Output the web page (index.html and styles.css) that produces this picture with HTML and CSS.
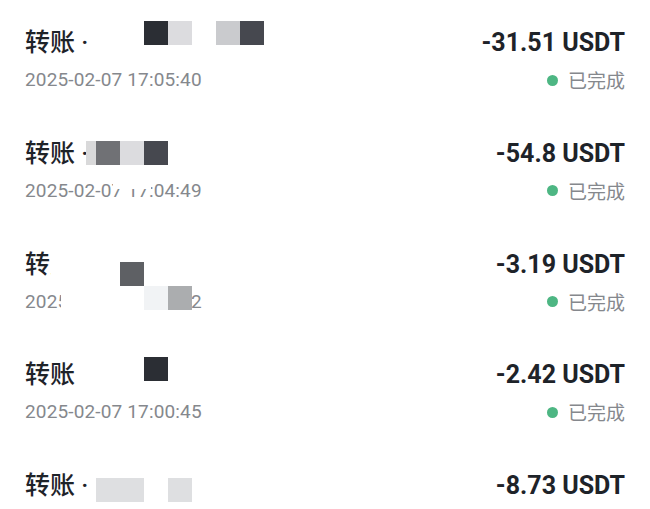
FILE: index.html
```html
<!DOCTYPE html>
<html lang="zh-CN">
<head>
    <meta charset="UTF-8">
    <title>转账记录</title>
    <link rel="stylesheet" href="styles.css">
</head>
<body>
<ul class="tx-list">
    <li class="tx">
        <div class="tx-main">
            <div class="tx-title">转账 ·</div>
            <div class="tx-time">2025-02-07 17:05:40</div>
        </div>
        <div class="tx-side">
            <div class="tx-amount">-31.51 USDT</div>
            <div class="tx-status"><span class="dot"></span>已完成</div>
        </div>
        <!-- 打码 -->
        <div class="mosaic m1">
            <i class="c-ink"></i><i class="c-pale"></i><i class="c-none"></i><i class="c-silver"></i><i class="c-slate"></i>
        </div>
    </li>
    <li class="tx">
        <div class="tx-main">
            <div class="tx-title">转账 ·</div>
            <div class="tx-time">2025-02-07 17:04:49</div>
        </div>
        <div class="tx-side">
            <div class="tx-amount">-54.8 USDT</div>
            <div class="tx-status"><span class="dot"></span>已完成</div>
        </div>
        <div class="mosaic m2">
            <i class="c-edge"></i><i class="c-grey"></i><i class="c-pale"></i><i class="c-slate"></i>
        </div>
        <div class="wipe w2"></div>
    </li>
    <li class="tx">
        <div class="tx-main">
            <div class="tx-title">转账 ·</div>
            <div class="tx-time">2025-02-07 17:01:42</div>
        </div>
        <div class="tx-side">
            <div class="tx-amount">-3.19 USDT</div>
            <div class="tx-status"><span class="dot"></span>已完成</div>
        </div>
        <div class="wipe w3a"></div>
        <div class="wipe w3b"></div>
        <div class="mosaic m3a"><i class="c-dim"></i></div>
        <div class="mosaic m3b"><i class="c-snow"></i><i class="c-silver2"></i></div>
    </li>
    <li class="tx">
        <div class="tx-main">
            <div class="tx-title">转账</div>
            <div class="tx-time">2025-02-07 17:00:45</div>
        </div>
        <div class="tx-side">
            <div class="tx-amount">-2.42 USDT</div>
            <div class="tx-status"><span class="dot"></span>已完成</div>
        </div>
        <div class="mosaic m4"><i class="c-ink"></i></div>
    </li>
    <li class="tx">
        <div class="tx-main">
            <div class="tx-title">转账 ·</div>
        </div>
        <div class="tx-side">
            <div class="tx-amount">-8.73 USDT</div>
        </div>
        <div class="mosaic m5">
            <i class="c-pale2"></i><i class="c-pale2"></i><i class="c-none"></i><i class="c-pale2"></i>
        </div>
    </li>
</ul>
</body>
</html>
```

FILE: styles.css
```css
*{
    margin:0;
    padding:0;
}
html,body{
    height:100%;
    overflow:hidden;
    background:#fff;
}
.tx-list{
    list-style:none;
}
.tx{
    position:relative;
    height:110.75px;
    padding:27px 25px 0;
    box-sizing:border-box;
    display:flex;
    justify-content:space-between;
}
.tx-main,.tx-side{
    display:flex;
    flex-direction:column;
    gap:8px;
}
.tx-side{
    align-items:flex-end;
}
.tx-title{
    font-family:Roboto,"Noto Sans CJK SC",sans-serif;
    font-size:25px;
    font-weight:500;
    line-height:32px;
    color:#1e2329;
}
.tx-time{
    font-family:Roboto,"Noto Sans CJK SC",sans-serif;
    font-size:19px;
    letter-spacing:0.15px;
    line-height:26px;
    color:#85888d;
}
.tx-amount{
    font-family:Roboto,"Noto Sans CJK SC",sans-serif;
    font-size:25px;
    font-weight:700;
    line-height:32px;
    color:#1e2329;
}
.tx-status{
    display:flex;
    align-items:center;
    gap:10px;
    font-family:"Noto Sans CJK SC",sans-serif;
    font-size:19px;
    line-height:26px;
    color:#85888d;
}
.dot{
    width:11px;
    height:11px;
    border-radius:50%;
    background:#4db683;
}

/* 打码块 */
.mosaic{
    position:absolute;
    display:flex;
}
.mosaic i{
    display:block;
    width:24px;
    height:24px;
}
.wipe{
    position:absolute;
    background:#fff;
}
.m1{left:144px;top:21px;}
.m2{left:86px;top:30px;}
.m2 .c-edge{width:10px;}
.m3a{left:120px;top:40px;}
.m3b{left:144px;top:64px;}
.m4{left:144px;top:25px;}
.m5{left:96px;top:35px;}

.w2{left:113px;top:73px;width:38px;height:5px;}
.w3a{left:51px;top:27px;width:69px;height:34px;}
.w3b{left:61px;top:64px;width:83px;height:28px;}

.c-none{background:transparent;}
.c-ink{background:#2b2e34;}
.c-slate{background:#46484f;}
.c-grey{background:#707175;}
.c-dim{background:#5e6064;}
.c-pale{background:#dcdcdf;}
.c-pale2{background:#dedfe1;}
.c-silver{background:#cacbce;}
.c-silver2{background:#abadaf;}
.c-snow{background:#f1f3f5;}
.c-edge{background:#d9d9da;}
```
